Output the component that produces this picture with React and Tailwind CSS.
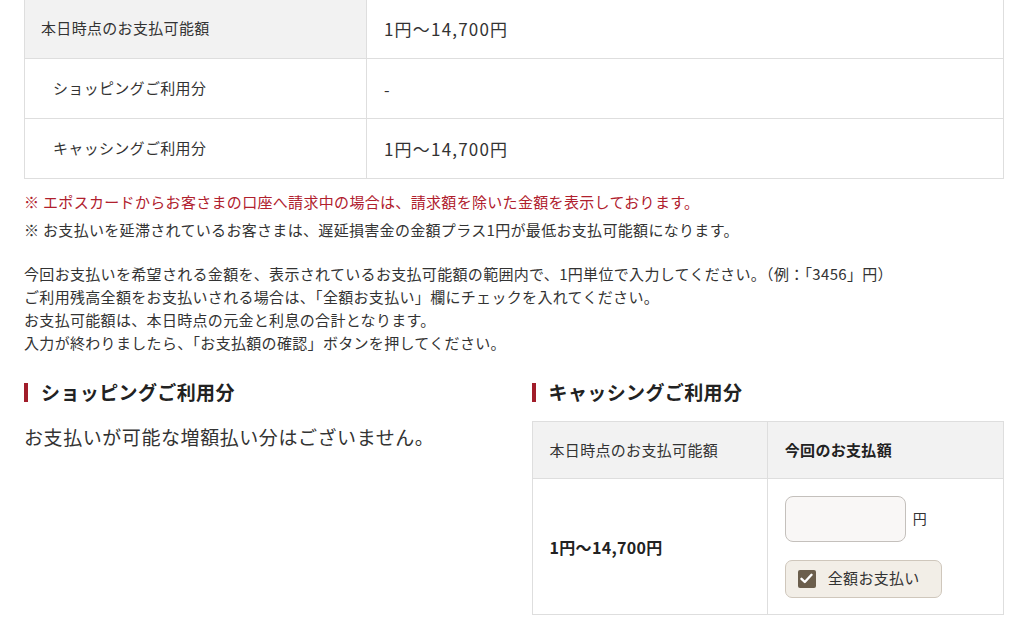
import React, { useState } from "react";

const font = { fontFamily: '"Hiragino Sans", "Noto Sans CJK JP", "Noto Sans", sans-serif' };

const Heading = ({ children }) => (
  <div className="flex items-center gap-[13px] h-[24px]">
    <span className="w-[4px] h-[19px] bg-[#a11d2a]" />
    <h2 className="text-[19px] font-bold text-[#222] tracking-[0.02em]">{children}</h2>
  </div>
);

const App = () => {
  const [amount, setAmount] = useState("");
  const [all, setAll] = useState(true);

  return (
    <div className="min-h-[625px] bg-white text-[#333] pl-[24px] pr-[20px] overflow-hidden tracking-[0.02em]" style={font}>
      {/* 本日時点の支払可能額 */}
      <div className="-mt-[2px] border border-[#dedede] bg-white">
        <div className="flex border-b border-[#dedede] h-[60px]">
          <div className="w-[342px] shrink-0 flex items-center bg-[#f2f2f2] pl-[16px] border-r border-[#dedede] text-[15px]">
            本日時点のお支払可能額
          </div>
          <div className="flex-1 flex items-center pl-[17px] text-[17px] tracking-[0.07em]">1円〜14,700円</div>
        </div>
        <div className="flex border-b border-[#dedede] h-[60px]">
          <div className="w-[342px] shrink-0 flex items-center pl-[28px] border-r border-[#dedede] text-[15px]">
            ショッピングご利用分
          </div>
          <div className="flex-1 flex items-center pl-[17px] text-[16px]">-</div>
        </div>
        <div className="flex h-[59px]">
          <div className="w-[342px] shrink-0 flex items-center pl-[28px] border-r border-[#dedede] text-[15px]">
            キャッシングご利用分
          </div>
          <div className="flex-1 flex items-center pl-[17px] text-[17px] tracking-[0.07em]">1円〜14,700円</div>
        </div>
      </div>

      <div className="mt-[11px] text-[15px] leading-[24px]">
        <p className="text-[#b0202d]">※ エポスカードからお客さまの口座へ請求中の場合は、請求額を除いた金額を表示しております。</p>
        <p className="mt-[4px]">※ お支払いを延滞されているお客さまは、遅延損害金の金額プラス1円が最低お支払可能額になります。</p>
      </div>

      <div className="mt-[20px] text-[15px] leading-[23px]">
        <p>今回お支払いを希望される金額を、表示されているお支払可能額の範囲内で、1円単位で入力してください。（例：「3456」円）</p>
        <p>ご利用残高全額をお支払いされる場合は、「全額お支払い」欄にチェックを入れてください。</p>
        <p>お支払可能額は、本日時点の元金と利息の合計となります。</p>
        <p>入力が終わりましたら、「お支払額の確認」ボタンを押してください。</p>
      </div>

      <div className="mt-[26px] grid grid-cols-2 gap-x-[35px]">
        <section>
          <Heading>ショッピングご利用分</Heading>
          <p className="mt-[20px] text-[19px] leading-[26px] tracking-[0.03em]">お支払いが可能な増額払い分はございません。</p>
        </section>

        <section>
          <Heading>キャッシングご利用分</Heading>
          <div className="mt-[17px] border border-[#dedede]">
            <div className="flex h-[57px] bg-[#f2f2f2] border-b border-[#dedede]">
              <div className="w-1/2 flex items-center pl-[17px] border-r border-[#dedede] text-[15px]">
                本日時点のお支払可能額
              </div>
              <div className="w-1/2 flex items-center pl-[17px] text-[15px] font-bold text-[#222]">
                今回のお支払額
              </div>
            </div>
            <div className="flex h-[135px]">
              <div className="w-1/2 flex items-center pl-[17px] border-r border-[#dedede] text-[16px] font-bold text-[#222] tracking-[0.02em]">
                1円〜14,700円
              </div>
              <div className="w-1/2 flex flex-col justify-center pl-[17px] gap-[18px]">
                <div className="flex items-center gap-[7px]">
                  <input
                    type="text"
                    value={amount}
                    onChange={(e) => setAmount(e.target.value)}
                    className="w-[121px] h-[46px] rounded-[8px] border border-[#c4c0bc] bg-[#f9f7f6] px-2 text-[15px] outline-none"
                  />
                  <span className="text-[14px]">円</span>
                </div>
                <button
                  type="button"
                  onClick={() => setAll(!all)}
                  className="w-[157px] h-[38px] rounded-[7px] border border-[#cfc7bc] bg-[#f2eee7] flex items-center pl-[12px] gap-[12px] text-[15px] text-[#333]"
                >
                  <span
                    className={`w-[18px] h-[18px] rounded-[2px] flex items-center justify-center ${
                      all ? "bg-[#6b5e4c]" : "bg-white border border-[#aaa]"
                    }`}
                  >
                    {all && (
                      <svg width="13" height="11" viewBox="0 0 13 11">
                        <path d="M1.5 5.8 L4.8 9 L11.5 1.8" fill="none" stroke="#fff" strokeWidth="2.4" strokeLinecap="round" strokeLinejoin="round" />
                      </svg>
                    )}
                  </span>
                  全額お支払い
                </button>
              </div>
            </div>
          </div>
        </section>
      </div>
    </div>
  );
};

export default App;
